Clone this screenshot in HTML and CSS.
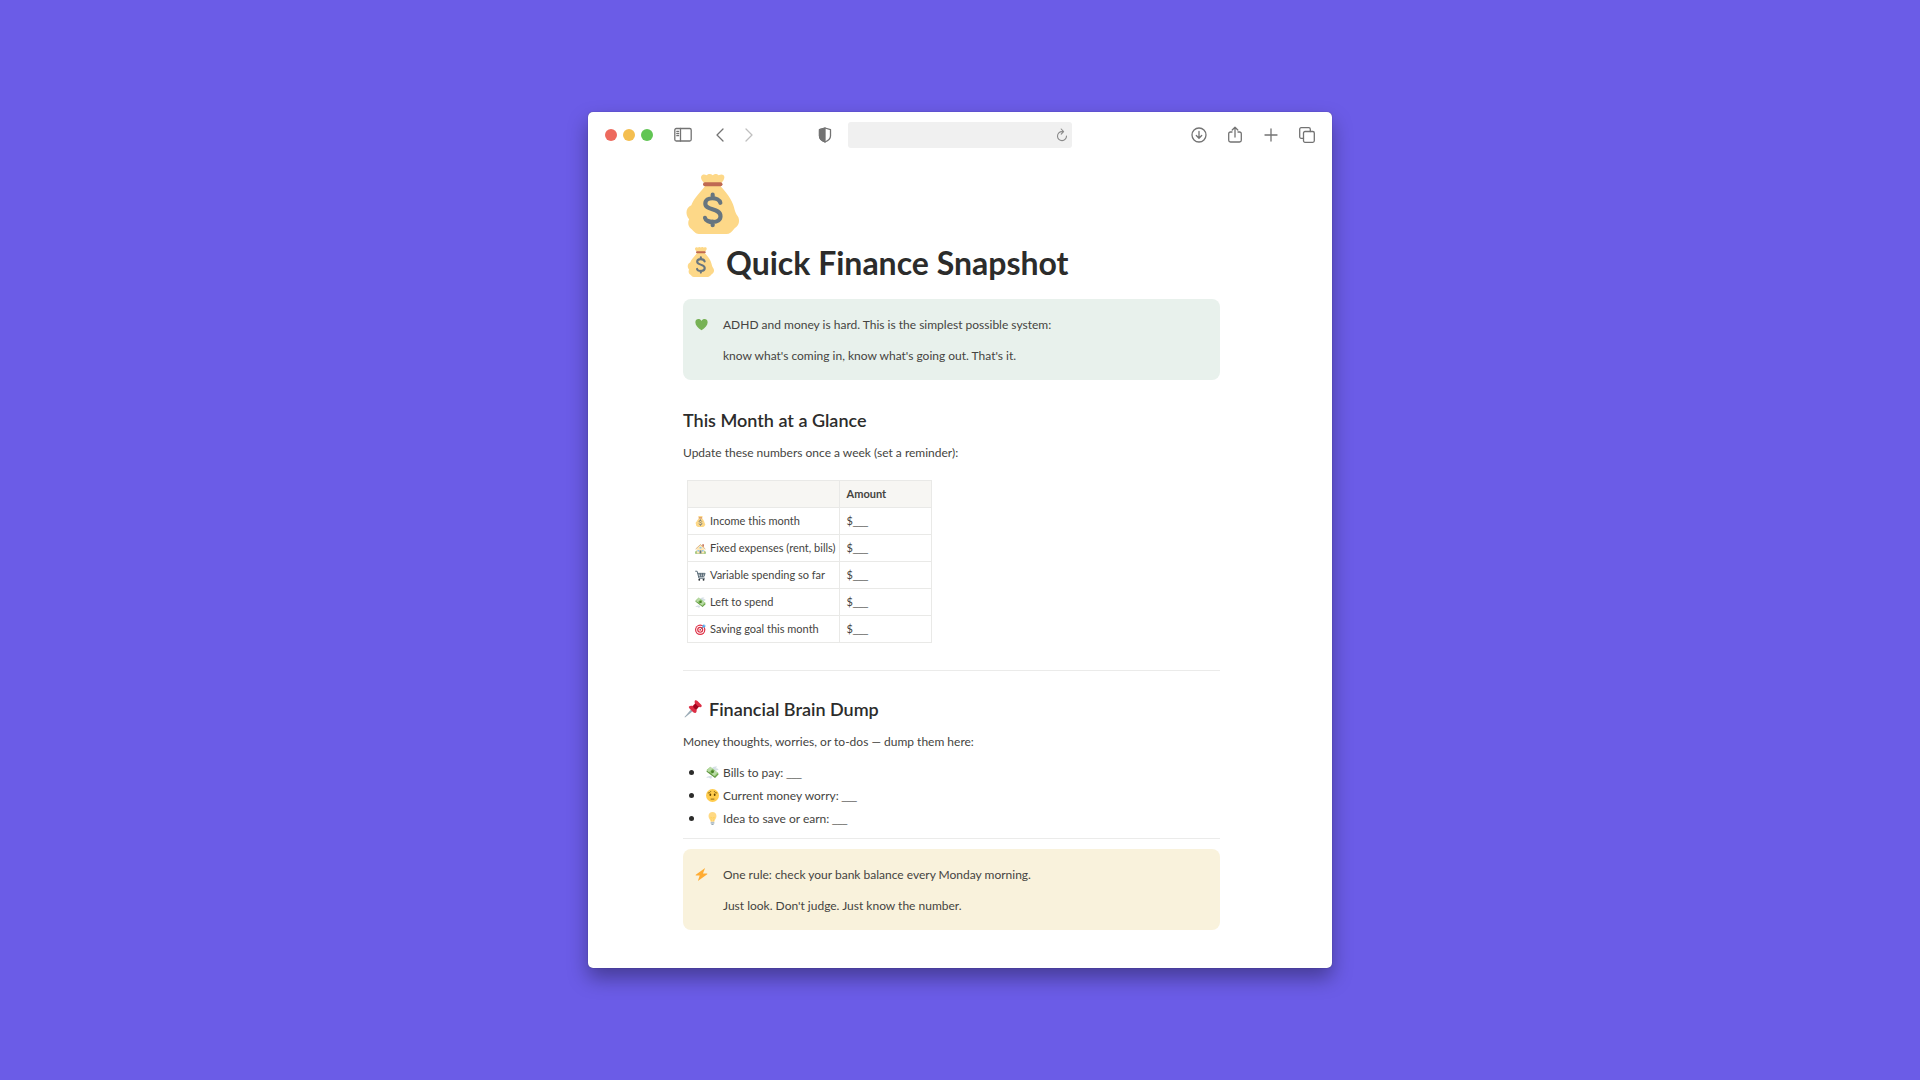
FILE: index.html
```html
<!DOCTYPE html>
<html lang="en">
<head>
<meta charset="utf-8">
<title>Quick Finance Snapshot</title>
<link rel="stylesheet" href="styles.css">
</head>
<body>

<!-- shared emoji drawings -->
<svg class="sprite" aria-hidden="true">
  <symbol id="bag" viewBox="0 0 36 36">
    <path fill="#fdd888" d="M13 5.5C11.5 4.5 10.500 3 10.900 1.500 11.500 0 13 0 14.200 .8 15.200-.3 16.800-.2 17.800.7 19-.3 20.500-.3 21.400.8 22.800-.1 24.500.1 24.800 1.600 25 3 24 4.500 22.700 5.500V7.500C26 11 29.500 15.500 30.600 20 31 22 31.600 23.500 32.200 24.500 34.500 27 34 30.800 31 32.500 29.500 34.500 28 36 26 36H9.500C7.500 36 6.500 34.300 5 33 3 31.500 2.700 29 3.700 27.200 1.200 24.500 1.600 20 5 18.700 6.500 14.500 10 11.500 13 7.500Z"/>
    <path stroke="#bf6952" stroke-width="2.400" stroke-linecap="round" d="M13.200 6.200h9.300"/>
    <path fill="none" stroke="#67757f" stroke-width="2.500" stroke-linecap="round" stroke-linejoin="round" d="M17.800 12.400v2M17.800 28.500v2.200M22.400 17.300C21.500 13.800 13.400 13.300 13.400 17.800 13.400 22 22.500 20.300 22.500 25.300 22.500 30 13.800 29.600 13.200 26.300"/>
  </symbol>
  <symbol id="heart" viewBox="0 0 36 36">
    <path fill="#77b255" d="M18 34C8 27 1 20 1 11.500 1 1 14 0 18 8 22 0 35 1 35 11.500 35 20 28 27 18 34Z"/>
  </symbol>
  <symbol id="house" viewBox="0 0 36 36">
    <path fill="#77b255" d="M1 31c0-5 4-6 8-5h18c5-2 8 1 8 6v3H1Z"/>
    <path fill="#ffe8b6" d="M5 17 18 6l13 11v17H5Z"/>
    <path fill="#c1694f" d="M24 4h5v8h-5Z"/>
    <path fill="none" stroke="#d9b082" stroke-width="3" stroke-linecap="round" stroke-linejoin="round" d="M3 19 18 5l15 14"/>
    <path fill="#66757f" d="M15 24h6v10h-6Z"/>
    <path fill="#88c9f9" d="M8 23h5v5H8ZM23 23h5v5h-5ZM15 13h6v5h-6Z"/>
  </symbol>
  <symbol id="cart" viewBox="0 0 36 36">
    <path fill="none" stroke="#546773" stroke-width="3" stroke-linecap="round" stroke-linejoin="round" d="M2 4h5l6 23h18M9 11h24l-4 11H12M11 16h20M17 11l2 11M25 11l-1 11"/>
    <circle cx="14" cy="32" r="3" fill="#292f33"/>
    <circle cx="28" cy="32" r="3" fill="#292f33"/>
  </symbol>
  <symbol id="cash" viewBox="0 0 36 36">
    <path fill="#d5dfe5" d="M16 7C18 2 25 0 31 2c-2 2-3 3-5 4 4 0 7 1 9 4-4 3-8 4-12 2ZM13 28C8 27 3 29 1 33c4 0 5 0 7-1 1 2 3 3 6 3 3-2 3-5 1-7Z"/>
    <path fill="#5c913b" d="M1 15 12 5l23 18-10 10Z"/>
    <path fill="#8bc46a" d="M1 12 12 2l23 18-10 10Z"/>
    <path fill="#e8f0e1" d="m10 5 3-3 6 5-11 10-5-4ZM25 12l7 6-9 10-7-6Z" opacity=".5"/>
    <circle cx="18" cy="16" r="4" fill="#4a8128"/>
  </symbol>
  <symbol id="target" viewBox="0 0 36 36">
    <circle cx="17" cy="19" r="17" fill="#dd2e44"/>
    <circle cx="17" cy="19" r="13" fill="#fff"/>
    <circle cx="17" cy="19" r="10" fill="#dd2e44"/>
    <circle cx="17" cy="19" r="6" fill="#fff"/>
    <circle cx="17" cy="19" r="3" fill="#dd2e44"/>
    <path stroke="#546773" stroke-width="2" d="M17 19 30 6"/>
    <path fill="#55acee" d="m24 6 6-6 1 5 5 1-6 6-5-1Z"/>
  </symbol>
  <symbol id="pin" viewBox="0 0 36 36">
    <path fill="#99aab5" d="M14 19 1 34l1 1 16-13Z"/>
    <path fill="#dd2e44" d="M22 1c1-1 3-1 5 1l7 7c2 2 2 4 0 5-2 1-4 0-5 0l-4 5c1 3 0 7-3 7-2 0-4-2-6-4l-4-4c-2-2-3-4-2-5 2-2 5-2 7-1l5-5c-1-2-1-5 0-6Z"/>
    <path fill="#a0041e" d="M23 7c2 3 4 5 7 6l-5 6c-3 0-6-3-7-6Z"/>
  </symbol>
  <symbol id="worry" viewBox="0 0 36 36">
    <circle cx="18" cy="18" r="18" fill="#ffcc4d"/>
    <path fill="none" stroke="#664500" stroke-width="2" stroke-linecap="round" d="M6 11c3 0 5-1 7-4M30 11c-3 0-5-1-7-4M14 28h8"/>
    <ellipse cx="12" cy="16" rx="2.500" ry="3.500" fill="#664500"/>
    <ellipse cx="24" cy="16" rx="2.500" ry="3.500" fill="#664500"/>
  </symbol>
  <symbol id="bulb" viewBox="0 0 36 36">
    <path fill="#ffd983" d="M29 11c0 7-5 10-6 16H13C12 21 7 18 7 11 7 4 12 0 18 0s11 4 11 11Z"/>
    <path fill="none" stroke="#ffcc4d" stroke-width="1.500" d="M16 27 13 14l5 3 5-3-3 13"/>
    <path fill="#ccd6dd" d="M13 27h10v6H13Z"/>
    <path fill="#99aab5" d="M13 29h10v2H13ZM14 33h8l-2 3h-4Z"/>
  </symbol>
  <symbol id="bolt" viewBox="0 0 36 36">
    <path fill="#ffac33" d="M28 0 3 18c-2 1-1 3 0 3h10L8 36 33 18c2-1 1-3 0-3H22Z"/>
  </symbol>
</svg>

<main class="window">
  <header class="toolbar">
    <div class="tools">
      <div class="lights">
        <span class="light red"></span>
        <span class="light yellow"></span>
        <span class="light green"></span>
      </div>
      <button class="tool sidebar" aria-label="Sidebar">
        <svg width="18" height="16" viewBox="0 0 18 16"><rect x=".8" y="1.500" width="16.400" height="12.500" rx="1.500"/><path d="M6.500 1.500v12.500M2.800 4.300h1.800M2.800 6.500h1.800M2.800 8.700h1.800"/></svg>
      </button>
      <button class="tool back" aria-label="Back">
        <svg width="10" height="16" viewBox="0 0 10 16"><path d="M8 2 2 8l6 6"/></svg>
      </button>
      <button class="tool forward" aria-label="Forward">
        <svg width="10" height="16" viewBox="0 0 10 16"><path d="m2 2 6 6-6 6"/></svg>
      </button>
      <button class="tool shield" aria-label="Privacy report">
        <svg width="14" height="16" viewBox="0 0 14 16"><path d="M7 1 12.500 2.700V9C12.500 12 10 13.800 7 15 4 13.800 1.500 12 1.500 9V2.700Z"/><path class="solid" d="M7 1v14C4 13.800 1.500 12 1.500 9V2.700Z"/></svg>
      </button>
    </div>
    <div class="address">
      <input type="text" aria-label="Address">
      <button class="tool reload" aria-label="Reload">
        <svg width="12" height="14" viewBox="0 0 12 14"><path d="M10.500 8A4.500 4.500 0 1 1 6 3.600h1.300M5.200 1l2.400 2.600L5.200 6.200"/></svg>
      </button>
    </div>
    <div class="tools right">
      <button class="tool" aria-label="Downloads">
        <svg width="16" height="16" viewBox="0 0 16 16"><circle cx="8" cy="8" r="7"/><path d="M8 4.500v6.500M5.300 8.500 8 11.200l2.700-2.700"/></svg>
      </button>
      <button class="tool" aria-label="Share">
        <svg width="16" height="18" viewBox="0 0 16 18"><path d="M5 6H3.500C2.300 6 1.700 6.600 1.700 7.700v6.600c0 1.100.6 1.700 1.800 1.700h9c1.200 0 1.800-.6 1.800-1.700V7.700c0-1.100-.6-1.700-1.800-1.700H11M8 11V1.200M5.200 4 8 1.200 10.800 4"/></svg>
      </button>
      <button class="tool" aria-label="New tab">
        <svg width="16" height="16" viewBox="0 0 16 16"><path d="M8 2v12M2 8h12"/></svg>
      </button>
      <button class="tool" aria-label="Show tabs">
        <svg width="16" height="16" viewBox="0 0 16 16"><rect x="4.500" y="4.500" width="10.800" height="10.800" rx="1.500"/><path d="M4.500 11.300H2.200C1.300 11.300.7 10.700.7 9.800V2.200C.7 1.300 1.300.7 2.200.7h7.600c.9 0 1.500.6 1.500 1.500v2.300"/></svg>
      </button>
    </div>
  </header>

  <article class="page">
    <svg class="page-icon"><use href="#bag"/></svg>
    <h1><svg class="emoji"><use href="#bag"/></svg>Quick Finance Snapshot</h1>

    <section class="callout green-box">
      <svg class="emoji"><use href="#heart"/></svg>
      <div>
        <p>ADHD and money is hard. This is the simplest possible system:</p>
        <p>know what's coming in, know what's going out. That's it.</p>
      </div>
    </section>

    <h2>This Month at a Glance</h2>
    <p>Update these numbers once a week (set a reminder):</p>

    <table>
      <thead>
        <tr><th></th><th>Amount</th></tr>
      </thead>
      <tbody>
        <tr><td><svg class="emoji"><use href="#bag"/></svg>Income this month</td><td>$<span class="blank">___</span></td></tr>
        <tr><td><svg class="emoji"><use href="#house"/></svg>Fixed expenses (rent, bills)</td><td>$<span class="blank">___</span></td></tr>
        <tr><td><svg class="emoji"><use href="#cart"/></svg>Variable spending so far</td><td>$<span class="blank">___</span></td></tr>
        <tr><td><svg class="emoji"><use href="#cash"/></svg>Left to spend</td><td>$<span class="blank">___</span></td></tr>
        <tr><td><svg class="emoji"><use href="#target"/></svg>Saving goal this month</td><td>$<span class="blank">___</span></td></tr>
      </tbody>
    </table>

    <hr>

    <h2><svg class="emoji"><use href="#pin"/></svg>Financial Brain Dump</h2>
    <p>Money thoughts, worries, or to-dos — dump them here:</p>
    <ul>
      <li><svg class="emoji"><use href="#cash"/></svg><span>Bills to pay: <span class="blank">___</span></span></li>
      <li><svg class="emoji"><use href="#worry"/></svg><span>Current money worry: <span class="blank">___</span></span></li>
      <li><svg class="emoji"><use href="#bulb"/></svg><span>Idea to save or earn: <span class="blank">___</span></span></li>
    </ul>

    <hr>

    <section class="callout yellow-box">
      <svg class="emoji"><use href="#bolt"/></svg>
      <div>
        <p>One rule: check your bank balance every Monday morning.</p>
        <p>Just look. Don't judge. Just know the number.</p>
      </div>
    </section>
  </article>
</main>

</body>
</html>
```
FILE: styles.css
```css
* {
  box-sizing: border-box;
}

body {
  margin: 0;
  min-height: 100vh;
  display: flex;
  align-items: center;
  justify-content: center;
  background: #6b5ce7;
  color: #454441;
  font-family: Lato, "Open Sans", sans-serif;
  font-size: 12px;
  line-height: 22px;
}

.sprite {
  position: absolute;
  width: 0;
  height: 0;
}

.window {
  width: 100%;
  max-width: 744px;
  background: #fff;
  border-radius: 5px;
  box-shadow: 0 0 1px rgba(0, 0, 0, 0.5), 0 10px 20px rgba(0, 0, 0, 0.35);
}

/* browser toolbar */
.toolbar {
  display: grid;
  grid-template-columns: 1fr 224px 1fr;
  align-items: center;
  height: 45px;
  padding: 0 17px;
}

.tools {
  display: flex;
  align-items: center;
}

.right {
  justify-content: flex-end;
  gap: 20px;
}

.lights {
  display: flex;
  gap: 6px;
}

.light {
  width: 12px;
  height: 12px;
  border-radius: 50%;
}

.red {
  background: #ed6a5e;
}

.yellow {
  background: #f4be4f;
}

.green {
  background: #61c554;
}

.tool {
  display: flex;
  padding: 0;
  border: 0;
  background: none;
}

.tool svg {
  fill: none;
  stroke: #737373;
  stroke-width: 1.3;
  stroke-linecap: round;
  stroke-linejoin: round;
}

.tool .solid {
  fill: #737373;
}

.sidebar {
  margin-left: 21px;
}

.back {
  margin-left: 23px;
}

.forward {
  margin-left: 19px;
}

.forward svg {
  stroke: #bfbfbf;
}

.shield {
  margin-left: auto;
  margin-right: 16px;
}

.address {
  position: relative;
}

.address input {
  display: block;
  width: 100%;
  height: 26px;
  border: 0;
  border-radius: 3px;
  background: #f0f0f0;
}

.reload {
  position: absolute;
  top: 6px;
  right: 4px;
}

.reload svg {
  stroke: #8a8a8a;
  stroke-width: 1.1;
}

/* page */
.page {
  padding: 17px 112px 38px 95px;
}

.page-icon {
  display: block;
  width: 60px;
  height: 60px;
}

h1, h2, p, ul {
  margin: 0;
}

h1, h2 {
  color: #2c2c2b;
}

h1 {
  margin: 8px 0 15px;
  font-size: 32px;
  font-weight: 700;
  line-height: 42px;
}

h2 {
  margin-bottom: 9px;
  font-size: 18px;
  font-weight: 600;
  line-height: 26px;
}

.emoji {
  flex: none;
  width: 13px;
  height: 13px;
  margin-right: 4px;
  vertical-align: -2px;
}

h1 .emoji {
  width: 30px;
  height: 30px;
  margin: 0 10px 0 3px;
}

h2 .emoji {
  width: 20px;
  height: 18px;
  margin-right: 6px;
}

.callout {
  display: flex;
  gap: 15px;
  padding: 15px 12px 13px;
  border-radius: 8px;
}

.callout .emoji {
  margin: 4px 0 0;
}

.callout p + p {
  margin-top: 9px;
}

.green-box {
  margin-bottom: 27px;
  background: #e8f1ec;
}

.yellow-box {
  background: #f9f2dc;
}

table {
  margin: 16px 0 27px 4px;
  border-collapse: collapse;
  font-size: 11px;
}

th, td {
  height: 27px;
  min-width: 92px;
  padding: 0 3px 0 7px;
  border: 1px solid #e9e9e7;
  line-height: 20px;
  text-align: left;
  white-space: nowrap;
}

th {
  background: #f7f6f3;
}

td .emoji {
  width: 11px;
  height: 11px;
}

/* blanks to fill in, drawn as one unbroken rule */
.blank {
  font-family: "Liberation Sans", sans-serif;
  font-size: 9px;
  line-height: 1;
}

hr {
  margin: 0 0 25px;
  border: 0;
  border-top: 1px solid #ebebea;
}

ul {
  margin: 8px 0;
  padding-left: 6px;
  list-style: none;
  line-height: 23px;
}

li {
  display: flex;
  align-items: center;
}

li::before {
  content: "";
  width: 5px;
  height: 5px;
  margin-right: 12px;
  border-radius: 50%;
  background: #2c2c2b;
}

ul + hr {
  margin-bottom: 10px;
}
```
